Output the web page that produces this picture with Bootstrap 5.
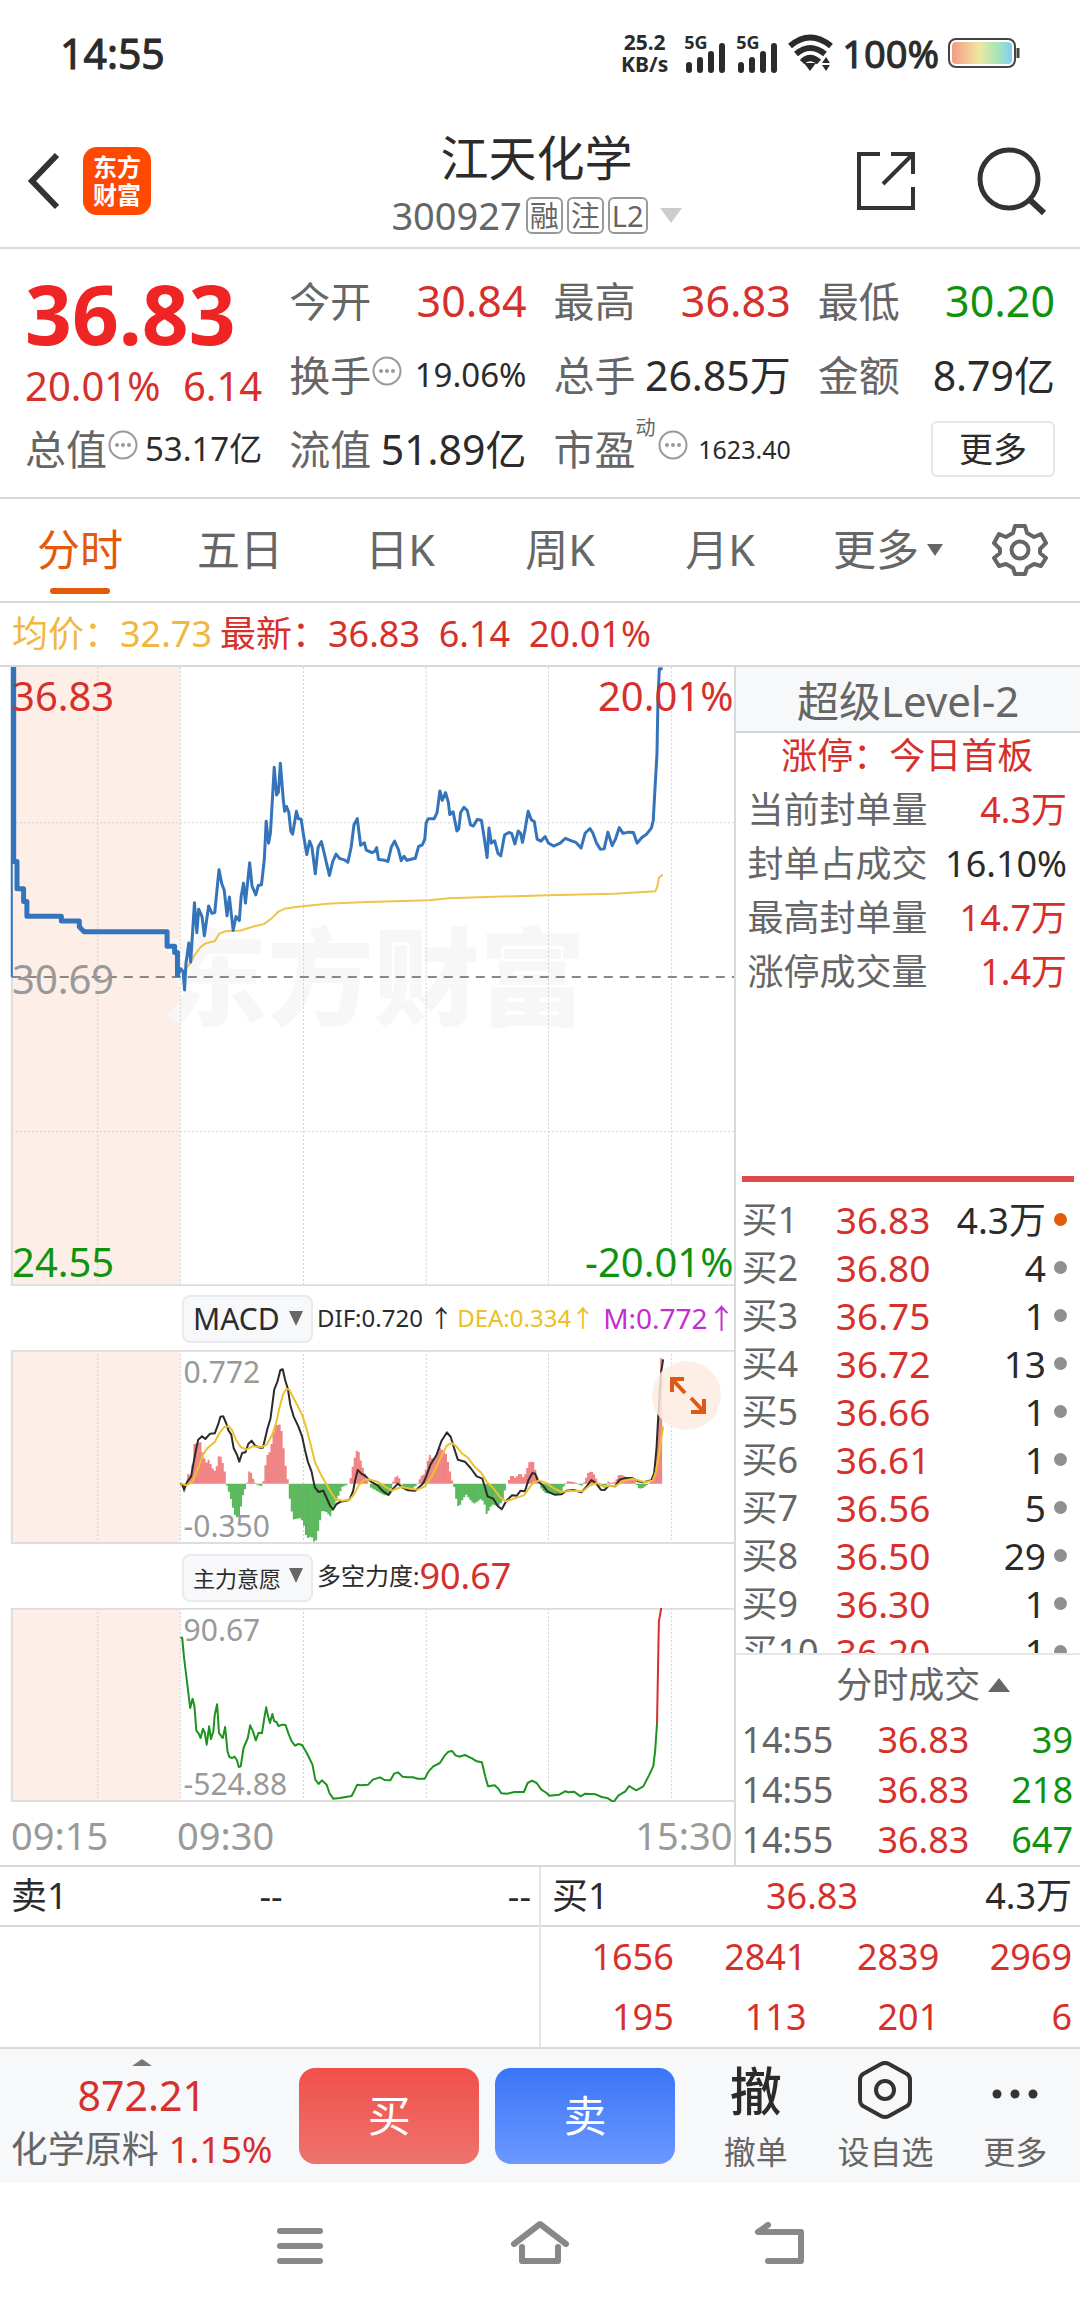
<!DOCTYPE html>
<html lang="zh-CN">
<head>
<meta charset="utf-8">
<meta name="viewport" content="width=device-width, initial-scale=1">
<title>江天化学 300927</title>
<link rel="stylesheet" href="https://cdn.jsdelivr.net/npm/bootstrap@5.3.0/dist/css/bootstrap.min.css">
<style>
:root{--up:#d6302c;--down:#0f930f;--ink:#2b2b2b;--dim:#666;--line:#d9d9d9;--soft:#f7f8fa;--accent:#e55a0a}
body{font-family:"Noto Sans","Noto Sans CJK SC",sans-serif;color:var(--ink);background:#fff;font-size:36px;line-height:48px;overflow-x:hidden}
a{color:inherit;text-decoration:none}
svg{display:block}
button{color:inherit;background:none;border:0;padding:0;line-height:inherit}
.up{color:var(--up)}.down{color:var(--down)}.dim{color:var(--dim)}
.statusbar{height:106px;padding:0 60px}
.clock{font-size:41px;-webkit-text-stroke:1px}
.pct{font-size:38px;-webkit-text-stroke:1px}
.speed{font-size:21px;line-height:22px;font-weight:700}
.speed div{height:22px}
.sig span{font-size:18px;line-height:18px;font-weight:700;display:block}
.topbar{display:grid;grid-template-columns:1fr auto 1fr;padding:22px 33px 5px 26px;border-bottom:2px solid var(--line)}
.brand{width:68px;height:68px;border-radius:14px;background:#ff4800;color:#fff;font-size:24px;line-height:28px;font-weight:700}
.name{font-size:48px;line-height:60px;font-weight:400}
.code{font-size:38px;line-height:54px}
.tagbox{border:2px solid #999;border-radius:6px;font-size:29px;line-height:34px;height:37px;padding:0 2px}
.tri{width:0;height:0;border:solid transparent;display:inline-block}
.quote{display:grid;grid-template-columns:repeat(4,1fr);grid-auto-rows:74px;column-gap:27px;padding:15px 25px 11px;border-bottom:2px solid var(--line);font-size:41px}
.quote .lead-cell{grid-row:span 2}
.quote span.up,.quote span.down{font-size:43px}
.bigprice{font-size:82px;line-height:98px;font-weight:700;color:#ef2424}
.quote .delta,.quote .delta span{font-size:40px;line-height:48px;color:var(--up)}
.v33{font-size:33px}.v25{font-size:25px}
.supmark{font-size:20px;line-height:24px;align-self:flex-start;margin-top:4px}
.morebtn{width:124px;height:56px;border:2px solid #e6e6e6;border-radius:6px;font-size:34px}
.tabs{height:104px;border-bottom:2px solid var(--line);font-size:43px;color:var(--dim)}
.tabs a{width:160px;text-align:center;position:relative;line-height:104px}
.tabs a.active{color:var(--accent)}
.tabs a.active::after{content:"";position:absolute;left:50px;right:50px;bottom:8px;height:6px;border-radius:3px;background:var(--accent)}
.avg{height:62px;padding-left:12px;white-space:pre}
.main{border-top:2px solid var(--line)}
.plots{flex:1 1 0;min-width:0}
.side{width:32%;border-left:2px solid var(--line)}
.plot{position:relative}
.plot svg.draw{width:100%}
.plot path{vector-effect:non-scaling-stroke;fill:none}
.lbl{position:absolute;line-height:40px;font-size:40px}
.lbl.sm{font-size:30px;color:#999;left:25%}
.wm{position:absolute;left:22%;top:41%;font-family:"Noto Sans CJK SC",sans-serif;font-weight:900;font-size:106px;line-height:100px;color:#f7f7f7}
.indi{height:64px;padding-left:182px;white-space:nowrap}
.pick{position:relative;width:131px}
.pick select{height:48px;width:131px;border:2px solid #e8eaee;background:var(--soft);border-radius:8px;padding:0 0 0 9px;font-size:30px;line-height:44px;color:var(--ink);appearance:none}
.pick select.zh{font-size:22px}
.pick .tri{position:absolute;right:10px;top:18px}
.v24{font-size:24px}.v28{font-size:28px}
.zoomer{position:absolute;right:13px;top:11px;width:69px;height:69px;border-radius:50%;background:rgba(253,236,224,.85)}
.axis{height:63px;font-size:38px;color:#999;line-height:66px;padding:0 2px 0 11px}
.l2{height:66px;background:var(--soft);border-bottom:2px solid #d0d5dc;font-size:42px;line-height:68px;text-align:center}
.seal{height:54px;line-height:54px;padding:0 13px 0 11px}
.seal.first{height:50px;line-height:46px}
.redbar{height:6px;background:#dc4a4a;margin:0 6px}
table{width:100%;border-collapse:collapse}
th{font-weight:400}td,th{padding:0;white-space:nowrap}
.bids{height:461px;overflow:hidden;padding:2px 13px 0 5px;border-bottom:2px solid #e6e6e6}
.bids tr{height:48px}.bids td{font-size:37px;text-align:right}
.bids i{display:inline-block;width:13px;height:13px;border-radius:50%;background:#8e8e93;margin-left:8px;vertical-align:8px}
.bids i.hot{background:#e55a0a}
.bids th{width:78px}.bids .pr{width:111px}
.tickhead{height:60px;padding-left:30px}
.ticks{padding:0 7px 0 5px}.ticks tr{height:50px}.ticks td{text-align:right}
.ticks th{width:132px}.ticks td.up{width:96px}
.half{flex:1 1 0}
.half:first-child{border-right:2px solid #e2e4e8}
.lvl{display:grid;grid-template-columns:repeat(3,1fr);align-items:center;height:60px;border-bottom:2px solid var(--line);padding:0 8px 0 11px}
.lots td{width:25%;height:60px;text-align:right;color:var(--up)}
.depth{border-top:2px solid var(--line);border-bottom:2px solid var(--line)}
.dock{height:134px;background:var(--soft)}
.idx{flex:284 1 0;min-width:0;white-space:nowrap}
.idxval{font-size:41px;line-height:58px}.idxname{font-size:37px;line-height:50px}
.trade{flex:180 1 0;height:96px;border-radius:16px;color:#fff;font-size:43px}
.buy{background:linear-gradient(#f24f49,#ed746e)}
.sell{background:linear-gradient(#3a75f8,#6c98ff)}
.acts{flex:390 1 0}
.act{flex:1 1 0;font-size:32px;line-height:46px;color:var(--dim)}
.act .pic{height:60px}
.che{font-size:52px;line-height:60px;font-weight:500;color:var(--ink)}
.sysnav{height:126px}
</style>
<script src="https://cdn.jsdelivr.net/npm/bootstrap@5.3.0/dist/js/bootstrap.bundle.min.js"></script>
</head>
<body>
<div class="statusbar d-flex align-items-center justify-content-between">
  <div class="clock">14:55</div>
  <div class="d-flex align-items-center">
    <div class="speed text-center me-3"><div>25.2</div><div>KB/s</div></div>
    <div class="sig me-2"><span>5G</span><svg width="44" height="22" overflow="visible" stroke="#2b2b2b" stroke-width="6" stroke-linecap="round"><path d="M5 14v5M16 9v10M27 3v16M38-5v24"/></svg></div>
    <div class="sig me-2"><span>5G</span><svg width="44" height="22" overflow="visible" stroke="#2b2b2b" stroke-width="6" stroke-linecap="round"><path d="M5 14v5M16 9v10M27 3v16M38-5v24"/></svg></div>
    <svg class="me-2" width="46" height="38" fill="none" stroke="#2b2b2b" stroke-width="6"><path d="M2 12Q22-5 43 12M8 20Q22 8 37 20M14 28Q22 20 31 28"/><path d="M16 29h12l-6 8zM34 29l4-6 4 6zM34 31h8l-4 6z" fill="#2b2b2b" stroke="none"/></svg>
    <span class="pct me-2">100%</span>
    <svg width="73" height="32"><defs><linearGradient id="bat"><stop offset="0" stop-color="#f79a86"/><stop offset=".45" stop-color="#efe8a0"/><stop offset=".75" stop-color="#a9e5b8"/><stop offset="1" stop-color="#82cdf5"/></linearGradient></defs><rect x="2" y="2" width="66" height="28" rx="7" fill="none" stroke="#444" stroke-width="2"/><rect x="5" y="5" width="60" height="22" rx="4" fill="url(#bat)"/><path d="M71 11v10" stroke="#444" stroke-width="3"/></svg>
  </div>
</div>

<header class="topbar">
  <div class="d-flex align-items-center pb-2">
    <a href="#" aria-label="返回"><svg width="57" height="60" fill="none" stroke="#333" stroke-width="6"><path d="M31 4L6 30l25 26"/></svg></a>
    <div class="brand d-flex flex-column justify-content-center text-center"><span>东方</span><span>财富</span></div>
  </div>
  <div class="text-center">
    <h1 class="name mb-0">江天化学</h1>
    <button class="code dim d-flex align-items-center justify-content-center gap-1" type="button"><span>300927</span><span class="tagbox">融</span><span class="tagbox">注</span><span class="tagbox">L2</span><span class="tri ms-2" style="border-width:15px 11px 0;border-top-color:#ccc"></span></button>
  </div>
  <div class="d-flex align-items-center justify-content-end pb-2">
    <a href="#" aria-label="分享" class="me-5"><svg width="74" height="62" fill="none" stroke="#333" stroke-width="4"><path d="M25 4H4v54h54V37M36 4h22v20M58 4L28 34"/></svg></a>
    <a href="#" aria-label="搜索"><svg width="70" height="70" fill="none" stroke="#333" stroke-width="5"><circle cx="32" cy="33" r="29"/><path d="M53 54l14 13" stroke-width="6"/></svg></a>
  </div>
</header>

<svg width="0" height="0" class="position-absolute"><symbol id="tip" viewBox="0 0 30 30"><circle cx="15" cy="15" r="13.5" fill="none" stroke="#999" stroke-width="2"/><g fill="#999"><circle cx="9" cy="15" r="2"/><circle cx="15" cy="15" r="2"/><circle cx="21" cy="15" r="2"/></g></symbol></svg>
<section class="quote">
  <div class="lead-cell"><div class="bigprice">36.83</div><div class="delta d-flex justify-content-between"><span>20.01%</span><span>6.14</span></div></div>
  <div class="d-flex align-items-center justify-content-between"><span class="dim">今开</span><span class="up">30.84</span></div>
  <div class="d-flex align-items-center justify-content-between"><span class="dim">最高</span><span class="up">36.83</span></div>
  <div class="d-flex align-items-center justify-content-between"><span class="dim">最低</span><span class="down">30.20</span></div>
  <div class="d-flex align-items-center justify-content-between"><span class="dim d-flex align-items-center">换手<svg width="32" height="38"><use href="#tip" x="1" width="30" height="30"/></svg></span><span class="v33">19.06%</span></div>
  <div class="d-flex align-items-center justify-content-between"><span class="dim">总手</span><span>26.85万</span></div>
  <div class="d-flex align-items-center justify-content-between"><span class="dim">金额</span><span>8.79亿</span></div>
  <div class="d-flex align-items-center justify-content-between"><span class="dim d-flex align-items-center">总值<svg width="32" height="38"><use href="#tip" x="1" width="30" height="30"/></svg></span><span class="v33">53.17亿</span></div>
  <div class="d-flex align-items-center justify-content-between"><span class="dim">流值</span><span>51.89亿</span></div>
  <div class="d-flex align-items-center justify-content-between"><span class="dim d-flex align-items-center h-100">市盈<span class="supmark">动</span><svg width="32" height="38"><use href="#tip" x="2" width="30" height="30"/></svg></span><span class="v25">1623.40</span></div>
  <div class="d-flex align-items-center justify-content-end"><button class="morebtn" type="button">更多</button></div>
</section>

<nav class="tabs d-flex align-items-center">
  <a class="active" href="#">分时</a><a href="#">五日</a><a href="#">日K</a><a href="#">周K</a><a href="#">月K</a>
  <a href="#" class="d-flex align-items-center justify-content-center gap-2 ps-3">更多<span class="tri" style="border-width:12px 8px 0;border-top-color:#666"></span></a>
  <button class="ms-auto me-4 pe-2" type="button" aria-label="设置"><svg width="56" height="56" viewBox="-28 -28 56 56" fill="none" stroke="#666" stroke-width="4" stroke-linejoin="round"><path d="M-5-24H5L7-17 14-13 21-16 26-7 20-1V3L26 8 21 16 14 14 7 18 5 24H-5L-7 18-14 14-21 16-26 8-20 3V-1L-26-7-21-16-14-13-7-17Z"/><circle r="8.500"/></svg></button>
</nav>

<div class="avg d-flex align-items-center"><span style="color:#f0b840">均价：32.73</span><span class="up ms-2">最新：36.83  6.14  20.01%</span></div>

<main class="main d-flex">
  <div class="plots">
    <div class="plot">
      <svg class="draw" height="619" viewBox="0 38 1556 1518" preserveAspectRatio="none"><rect x="25" y="38" width="357" height="1518" fill="#fdeee7"/></svg>
      <div class="wm">东方财富</div>
      <svg class="draw position-absolute top-0 start-0" height="619" viewBox="0 38 1556 1518" preserveAspectRatio="none">
        <path d="M207 38V1556M382 38V1556M643 38V1556M903 38V1556M1162 38V1556M1423 38V1556M25 420H1556M25 1177H1556" stroke="#d2d2d2" stroke-dasharray="2 2"/>
        <path d="M25 38V1556M25 1554H1556" stroke="#ddd" stroke-width="2"/>
        <path d="M25 798H1556" stroke="#888" stroke-width="2" stroke-dasharray="9 7"/>
        <path d="M383 778L390 785 396 775 404 762 412 745 425 725 435 716 455 710 465 692 478 686 510 684 535 675 560 668 575 655 590 638 605 630 640 625 700 618 780 614 910 610 950 605 1030 602 1160 598 1300 594 1388 588 1392 580 1396 555 1404 547" stroke="#f0c34c" stroke-width="2"/>
        <path d="M25 38V798" stroke="#3474bb" stroke-width="2"/>
        <path d="M29 38V515H36V582H50V613H57V649H130V661H168V675L178 687H354V723H370V738H376V798" stroke="#3474bb" stroke-width="5" stroke-linejoin="round"/>
        <path stroke="#3474bb" stroke-width="3" stroke-linejoin="round" d="M376 798L383 778 388 785 391 830 394 765 400 715 404 762 412 616 417 690 421 632 428 650 433 697 442 624 449 642 455 640 464 535 470 570 475 585 481 648 486 602 494 684 500 650 507 660 511 600 516 568 520 617 529 518 534 575 542 597 547 574 554 572 560 510 564 416 569 470 573 445 581 284 586 352 590 345 594 274 600 360 603 392 607 380 612 395 616 440 620 448 628 392 632 410 638 411 643 450 650 498 656 465 661 480 668 545 674 480 681 466 686 490 692 520 698 549 705 515 712 497 720 508 730 511 737 517 744 480 750 425 757 410 764 475 772 469 776 487 788 493 794 490 798 481 802 510 815 512 822 515 829 480 836 465 844 485 850 513 856 502 862 512 880 507 887 478 895 474 900 460 903 420 907 410 920 410 926 395 932 342 937 365 944 346 950 370 953 400 960 393 968 440 972 435 976 395 983 382 990 390 997 425 1003 428 1011 412 1020 414 1025 450 1032 505 1036 433 1041 470 1048 464 1055 495 1061 501 1069 450 1078 444 1084 446 1091 472 1098 440 1103 446 1107 468 1112 440 1119 392 1126 413 1132 417 1138 460 1146 465 1155 454 1162 470 1173 477 1187 470 1198 458 1208 463 1220 468 1231 482 1240 445 1250 434 1256 445 1264 470 1272 485 1280 484 1288 443 1297 476 1304 460 1312 432 1320 446 1332 443 1342 444 1350 470 1360 456 1370 448 1380 433 1384 415 1388 330 1392 250 1394 120 1397 42 1404 42"/>
      </svg>
      <span class="lbl up" style="left:12px;top:9px">36.83</span><span class="lbl up" style="right:1px;top:9px">20.01%</span>
      <span class="lbl" style="left:12px;top:292px;color:#999">30.69</span>
      <span class="lbl down" style="left:12px;bottom:4px">24.55</span><span class="lbl down" style="right:1px;bottom:4px">-20.01%</span>
    </div>
    <div class="indi d-flex align-items-center">
      <div class="pick me-1"><select aria-label="指标一"><option>MACD</option></select><span class="tri" style="border-width:15px 7px 0;border-top-color:#666"></span></div>
      <span class="v24">DIF:0.720 ↑</span><span class="v24 ms-1" style="color:#eac026">DEA:0.334↑</span><span class="v28 ms-2" style="color:#c22ed0">M:0.772↑</span>
    </div>
    <div class="plot">
      <svg class="draw" height="194" viewBox="0 206 1556 582" preserveAspectRatio="none">
        <rect x="25" y="206" width="357" height="582" fill="#fdeee7"/>
        <path d="M207 206V788M382 206V788M643 206V788M903 206V788M1162 206V788M1423 206V788" stroke="#d2d2d2" stroke-dasharray="2 2"/>
        <path d="M1556 208H25V785H1556" stroke="#ddd" stroke-width="2"/>
        <path id="rise" stroke="#f08484" stroke-width="2"/><path id="fall" stroke="#5cb85c" stroke-width="2"/>
        <path stroke="#2b2b2b" stroke-width="2" stroke-linejoin="round" d="M382 606L387 612 390 625 397 600 405 585 410 545 416 500 420 475 428 465 435 473 445 457 455 456 462 430 467 406 473 405 479 425 484 447 490 460 495 500 502 520 507 541 513 515 520 513 526 488 533 478 540 492 550 499 557 499 562 470 567 440 573 412 577 370 581 325 588 300 594 266 599 264 604 295 610 323 615 370 622 405 632 435 640 465 646 505 652 540 660 570 667 618 675 632 685 628 692 650 700 675 706 684 713 668 722 661 740 656 748 630 752 600 758 566 765 576 775 585 785 600 800 612 810 628 823 641 833 622 843 607 852 618 865 627 880 628 888 618 897 605 903 585 912 550 925 520 935 480 947 453 955 467 962 500 970 535 985 541 997 560 1010 585 1022 592 1028 620 1033 645 1045 652 1055 675 1063 684 1073 658 1085 642 1095 643 1103 628 1112 630 1120 595 1128 575 1134 577 1140 600 1150 612 1160 630 1175 640 1190 639 1200 628 1215 626 1232 633 1243 615 1253 596 1263 606 1273 625 1281 626 1290 613 1303 615 1313 595 1322 591 1340 590 1352 600 1363 603 1380 597 1386 575 1391 500 1396 370 1401 270 1405 234"/>
        <path stroke="#edc02f" stroke-width="2" stroke-linejoin="round" d="M382 606L395 612 408 600 420 560 430 520 440 500 455 482 465 455 475 437 485 435 492 447 500 475 510 497 522 505 535 495 555 497 565 490 577 460 585 425 592 380 600 338 607 323 613 325 620 345 630 372 640 400 650 445 660 500 668 545 680 580 690 605 700 630 710 652 725 658 740 656 750 640 760 612 770 597 780 594 800 601 815 615 830 628 850 617 870 622 885 625 900 615 915 585 925 555 935 525 947 492 957 485 967 495 978 515 992 530 1005 555 1020 575 1032 603 1045 620 1060 648 1072 660 1090 651 1110 642 1120 622 1130 604 1142 598 1155 604 1175 622 1190 632 1210 628 1235 630 1250 612 1265 605 1280 615 1305 613 1320 600 1340 592 1365 602 1383 598 1390 570 1397 510 1405 435"/>
      </svg>
      <span class="lbl sm" style="top:2px">0.772</span><span class="lbl sm" style="bottom:-2px">-0.350</span>
      <button class="zoomer" type="button" aria-label="放大"><svg width="69" height="69" fill="none" stroke="#dc5a14" stroke-width="4"><path d="M32 18H20v13M20 18l13 14M52 38v13H39M52 51L39 37"/></svg></button>
    </div>
    <div class="indi d-flex align-items-center">
      <div class="pick me-1"><select class="zh" aria-label="指标二"><option>主力意愿</option></select><span class="tri" style="border-width:15px 7px 0;border-top-color:#666"></span></div>
      <span class="v24">多空力度:</span><span class="up">90.67</span>
    </div>
    <div class="plot">
      <svg class="draw" height="194" viewBox="0 110 1556 582" preserveAspectRatio="none">
        <rect x="25" y="110" width="357" height="582" fill="#fdeee7"/>
        <path d="M207 110V692M382 110V692M643 110V692M903 110V692M1162 110V692M1423 110V692" stroke="#d2d2d2" stroke-dasharray="2 2"/>
        <path d="M1556 112H25V689H1556" stroke="#ddd" stroke-width="2"/>
        <path stroke="#1c931c" stroke-width="2" stroke-linejoin="round" d="M382 199L386 199 390 260 403 410 408 382 412 405 416 478 421 487 425 500 430 472 434 485 438 520 443 465 447 503 452 480 455 430 460 399 464 485 468 493 472 500 477 467 482 540 486 557 492 560 497 556 502 567 506 587 510 585 516 530 525 500 530 462 536 480 542 507 548 484 555 486 560 440 564 408 568 435 572 455 577 428 581 450 586 452 590 464 598 460 605 461 612 490 618 510 625 523 632 518 640 521 650 545 662 580 668 625 675 638 682 627 692 640 698 665 706 682 720 680 745 674 750 660 757 640 765 642 780 640 790 625 805 618 815 626 827 627 835 607 843 603 853 616 863 618 875 618 885 622 900 622 908 600 918 585 932 575 942 553 950 541 958 539 965 552 973 556 985 551 1000 561 1010 570 1021 573 1028 615 1034 645 1048 642 1056 652 1062 666 1075 667 1090 662 1110 662 1118 635 1127 628 1137 635 1147 655 1158 665 1164 673 1185 670 1197 660 1205 663 1216 661 1230 675 1240 667 1262 669 1275 677 1288 681 1300 692 1310 673 1325 660 1333 644 1348 657 1363 645 1375 612 1384 585 1388 540 1392 458"/>
        <path stroke="#d6302c" stroke-width="2" d="M1392 458L1396 150 1401 110"/>
      </svg>
      <span class="lbl sm" style="top:2px">90.67</span><span class="lbl sm" style="bottom:-2px">-524.88</span>
    </div>
    <div class="axis d-flex"><span style="width:166px">09:15</span><span>09:30</span><span class="ms-auto">15:30</span></div>
  </div>

  <aside class="side">
    <div class="l2 dim">超级Level-2</div>
    <div class="seal first up text-center">涨停：今日首板</div>
    <div class="seal d-flex justify-content-between"><span class="dim">当前封单量</span><span class="up">4.3万</span></div>
    <div class="seal d-flex justify-content-between"><span class="dim">封单占成交</span><span>16.10%</span></div>
    <div class="seal d-flex justify-content-between"><span class="dim">最高封单量</span><span class="up">14.7万</span></div>
    <div class="seal d-flex justify-content-between"><span class="dim">涨停成交量</span><span class="up">1.4万</span></div>
    <div style="height:177px"></div>
    <div class="redbar"></div>
    <div style="height:12px"></div>
    <div class="bids"><table><tbody id="bidrows"></tbody></table></div>
    <button class="tickhead dim d-flex align-items-center justify-content-center gap-2 w-100" type="button"><span>分时成交</span><span class="tri" style="border-width:0 11px 14px;border-bottom-color:#666"></span></button>
    <div class="ticks"><table><tbody>
      <tr><th class="dim">14:55</th><td class="up">36.83</td><td class="down">39</td></tr>
      <tr><th class="dim">14:55</th><td class="up">36.83</td><td class="down">218</td></tr>
      <tr><th class="dim">14:55</th><td class="up">36.83</td><td class="down">647</td></tr>
    </tbody></table></div>
  </aside>
</main>

<section class="depth d-flex">
  <div class="half">
    <div class="lvl"><span>卖1</span><span class="text-center">--</span><span class="text-end">--</span></div>
  </div>
  <div class="half">
    <div class="lvl"><span>买1</span><span class="up text-center">36.83</span><span class="text-end">4.3万</span></div>
    <div class="pe-2"><table class="lots"><tbody><tr><td>1656</td><td>2841</td><td>2839</td><td>2969</td></tr><tr><td>195</td><td>113</td><td>201</td><td>6</td></tr></tbody></table></div>
  </div>
</section>

<footer>
  <div class="dock d-flex align-items-center">
    <div class="idx text-center"><div class="tri d-block mx-auto" style="border-width:0 10px 7px;border-bottom-color:#777"></div><div class="up idxval">872.21</div><div class="dim idxname">化学原料 <span class="up">1.15%</span></div></div>
    <button class="trade buy mx-3" type="button">买</button>
    <button class="trade sell" type="button">卖</button>
    <div class="acts d-flex ms-3 pt-1">
      <a class="act text-center" href="#"><div class="pic che mb-2">撤</div>撤单</a>
      <a class="act text-center" href="#"><div class="pic mb-2"><svg class="mx-auto" width="56" height="60" fill="none" stroke="#333" stroke-width="4" stroke-linejoin="round"><path d="M24 3q4-2 8 0L50 13q3 2 3 6V39q0 4-3 6L32 55q-4 2-8 0L6 45q-3-2-3-6V19q0-4 3-6Z"/><circle cx="28" cy="29" r="9"/></svg></div>设自选</a>
      <a class="act text-center" href="#"><div class="pic mb-2"><svg class="mx-auto" width="56" height="60" fill="#333"><circle cx="10" cy="33" r="4.500"/><circle cx="28" cy="33" r="4.500"/><circle cx="46" cy="33" r="4.500"/></svg></div>更多</a>
    </div>
  </div>
  <nav class="sysnav d-flex align-items-center justify-content-center">
    <button type="button" aria-label="任务"><svg width="240" height="60" fill="none" stroke="#888" stroke-width="6" stroke-linecap="round"><path d="M3 15H43M3 30H43M3 45H43" transform="translate(97)"/></svg></button>
    <button type="button" aria-label="主页"><svg width="240" height="60" fill="none" stroke="#888" stroke-width="6" stroke-linecap="round" stroke-linejoin="round"><path d="M94 28L120 8l26 20M102 31V45H138V31"/></svg></button>
    <button type="button" aria-label="后退"><svg width="240" height="60" fill="none" stroke="#888" stroke-width="6" stroke-linecap="round" stroke-linejoin="round"><path d="M108 9L98 16H141V45H108"/></svg></button>
  </nav>
</footer>

<script>
const bids=[['36.83','4.3万'],['36.80','4'],['36.75','1'],['36.72','13'],['36.66','1'],['36.61','1'],['36.56','5'],['36.50','29'],['36.30','1'],['36.20','1']];
document.getElementById('bidrows').innerHTML=bids.map((b,i)=>`<tr><th class="dim">买${i+1}</th><td class="up pr">${b[0]}</td><td>${b[1]}<i${i?'':' class="hot"'}></i></td></tr>`).join('');
/* MACD histogram: key points of the envelope, sampled once per bar */
const env=[386,610,390,635,393,612,396,600,400,570,404,585,408,545,412,485,417,487,421,483,425,483,430,520,437,545,442,535,450,560,456,570,460,550,464,520,468,527,472,545,477,575,480,610,487,640,492,670,497,700,502,708,508,706,513,650,519,625,523,608,528,570,533,575,538,600,545,610,555,615,560,590,564,523,570,518,576,483,581,440,586,424,590,437,594,425,598,460,603,528,607,572,611,605,615,670,622,715,635,710,642,720,650,772,660,765,668,788,674,750,682,690,690,690,700,705,708,675,718,640,726,615,738,609,742,597,748,550,753,520,758,499,763,530,770,566,777,590,781,605,785,618,800,630,815,642,825,642,832,605,836,590,841,582,846,590,850,608,858,627,870,625,880,615,886,603,892,585,900,577,905,545,910,520,917,535,925,520,932,500,940,510,946,520,952,560,958,598,962,615,966,650,972,680,980,655,988,640,996,655,1004,668,1012,660,1020,652,1027,670,1032,705,1037,680,1044,670,1055,675,1065,660,1072,612,1077,600,1084,580,1092,590,1102,575,1110,590,1117,560,1122,540,1130,542,1136,575,1142,600,1146,620,1155,635,1175,640,1190,635,1196,608,1203,600,1218,602,1226,610,1234,613,1240,595,1247,572,1253,570,1260,580,1266,603,1272,615,1282,620,1288,600,1296,605,1304,600,1311,580,1320,582,1330,590,1345,598,1352,620,1360,622,1370,612,1380,600,1388,580,1393,450,1397,310,1400,234,1405,207];
let up='',dn='',k=0;
for(let x=386;x<=1405;x+=4.3){while(env[k+2]<x)k+=2;const t=(x-env[k])/(env[k+2]-env[k]),y=env[k+1]+t*(env[k+3]-env[k+1]);if(y<607)up+=`M${x} 607V${y}`;else dn+=`M${x} 607V${y}`}
document.getElementById('rise').setAttribute('d',up);document.getElementById('fall').setAttribute('d',dn);
</script>
</body>
</html>
